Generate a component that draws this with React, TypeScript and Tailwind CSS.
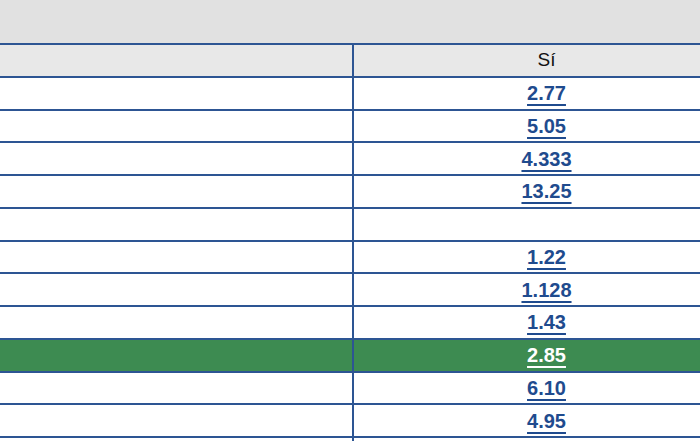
import React from "react";

const rows: { v: string; green?: boolean }[] = [
  { v: "2.77" },
  { v: "5.05" },
  { v: "4.333" },
  { v: "13.25" },
  { v: "" },
  { v: "1.22" },
  { v: "1.128" },
  { v: "1.43" },
  { v: "2.85", green: true },
  { v: "6.10" },
  { v: "4.95" },
  { v: "" },
];

export default function App() {
  return (
    <div
      className="w-[700px] h-[441px] overflow-hidden bg-white"
      style={{ fontFamily: '"Liberation Sans", Arial, sans-serif' }}
    >
      <div className="h-[43px] bg-[#e1e1e1]" />
      <div className="w-[739px] flex flex-col">
        <div className="flex h-[32.75px] border-t-2 border-[#2d5593] bg-[#e8e8e8]">
          <div className="w-[354px] shrink-0 border-r-2 border-[#2d5593]" />
          <div className="flex-1 flex items-center justify-center text-[19px] text-[#111]">
            Sí
          </div>
        </div>
        {rows.map((r, i) => (
          <div
            key={i}
            className={
              "flex h-[32.75px] border-t-2 border-[#2d5593] " +
              (r.green ? "bg-[#3d8b51]" : "bg-white")
            }
          >
            <div className="w-[354px] shrink-0 border-r-2 border-[#2d5593]" />
            <div className="flex-1 flex items-center justify-center">
              {r.v && (
                <a
                  className={
                    "text-[20px] font-bold underline underline-offset-[4px] decoration-2 " +
                    (r.green ? "text-white" : "text-[#1f4b8e]")
                  }
                >
                  {r.v}
                </a>
              )}
            </div>
          </div>
        ))}
      </div>
    </div>
  );
}
